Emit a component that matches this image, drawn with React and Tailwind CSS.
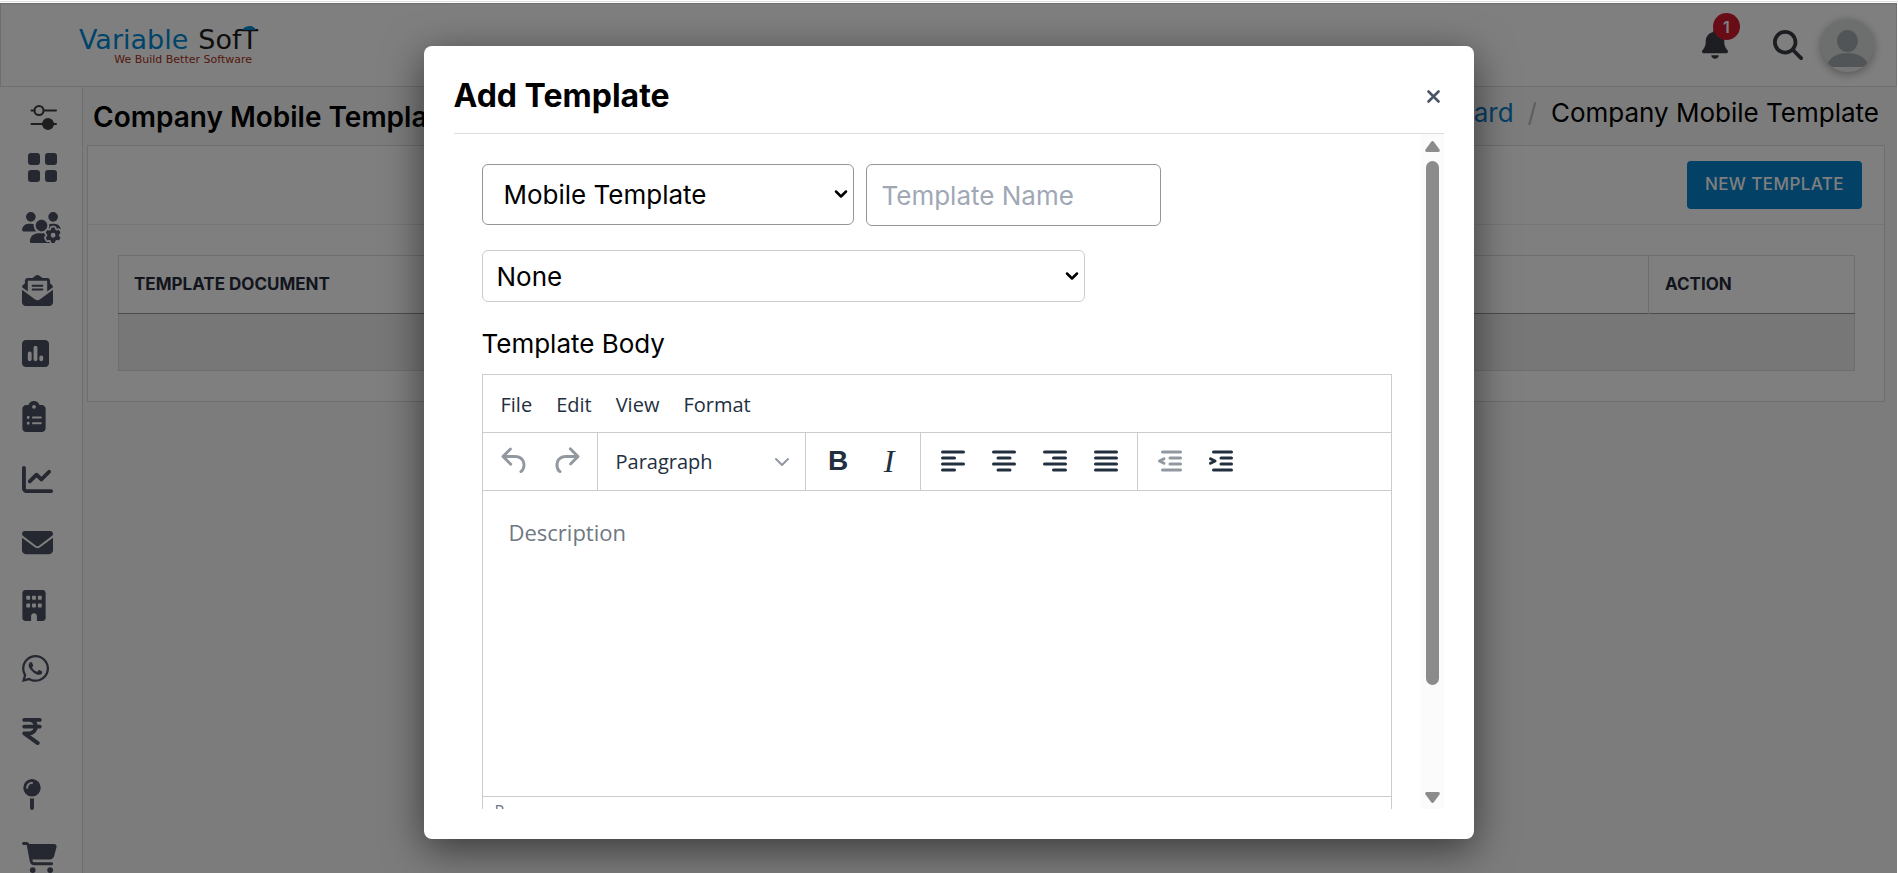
import {
  FaBell,
  FaBuilding,
  FaCartShopping,
  FaChartLine,
  FaClipboardList,
  FaEnvelope,
  FaEnvelopeOpenText,
  FaIndianRupeeSign,
  FaMagnifyingGlass,
  FaMapPin,
  FaSquarePollVertical,
  FaUsersGear,
  FaWhatsapp,
} from "react-icons/fa6";
import { ChevronDown } from "lucide-react";

const NAV = [
  ["Users", FaUsersGear, "w-[39px]"],
  ["Letters", FaEnvelopeOpenText, "w-[31px]"],
  ["Polls", FaSquarePollVertical, "w-[27px]"],
  ["Tasks", FaClipboardList, "w-6"],
  ["Reports", FaChartLine, "w-[31px]"],
  ["Mail", FaEnvelope, "w-[31px]"],
  ["Company", FaBuilding, "w-6"],
  ["WhatsApp", FaWhatsapp, "w-[27px]"],
  ["Payments", FaIndianRupeeSign, "w-5"],
  ["Locations", FaMapPin, "w-5"],
  ["Orders", FaCartShopping, "w-[35px]"],
];

const UNDO =
  "M6.4 8H12c3.7 0 6.2 2 6.8 5.1.6 2.7-.4 5.6-2.3 6.8a1 1 0 0 1-1-1.8c1.1-.6 1.8-2.7 1.4-4.6-.5-2.1-2.1-3.5-4.9-3.5H6.4l3.3 3.3a1 1 0 1 1-1.4 1.4l-5-5a1 1 0 0 1 0-1.4l5-5a1 1 0 0 1 1.4 1.4L6.4 8Z";
const REDO =
  "M17.6 10H12c-2.8 0-4.4 1.4-4.9 3.5-.4 2 .3 4 1.4 4.6a1 1 0 1 1-1 1.8c-2-1.2-2.9-4.1-2.3-6.8.6-3 3-5.1 6.8-5.1h5.6l-3.3-3.3a1 1 0 1 1 1.4-1.4l5 5a1 1 0 0 1 0 1.4l-5 5a1 1 0 0 1-1.4-1.4l3.3-3.3Z";

function Tool({ label, muted, children }) {
  return (
    <button
      type="button"
      aria-label={label}
      className={`flex w-[51px] items-center justify-center ${muted ? "text-[#9198a0]" : "text-[#222f3e]"}`}
    >
      {children}
    </button>
  );
}

function Glyph({ d }) {
  return (
    <svg viewBox="0 0 24 24" className="size-9" fill="currentColor" aria-hidden="true">
      <path d={d} />
    </svg>
  );
}

/* Four rounded bars, each given as [start, end] on the 24-unit grid. */
function Bars({ rows, arrow }) {
  return (
    <svg viewBox="0 0 24 24" className="size-9" fill="none" stroke="currentColor" strokeWidth="2" strokeLinecap="round" aria-hidden="true">
      {rows.map(([a, b], i) => (
        <path key={i} d={`M${a + 1} ${6 + i * 4}H${b - 1}`} />
      ))}
      {arrow && <path d={arrow} strokeLinejoin="round" />}
    </svg>
  );
}

function Group({ children }) {
  return <div className="flex border-r border-[#cccccc] pb-0.5 pl-[7px] pr-[5px]">{children}</div>;
}

function Header() {
  return (
    <header className="flex h-[84px] shrink-0 items-start justify-between border border-[#dcdcdc] bg-white pl-[78px] pr-[22px]">
      <a href="#home" className="flex flex-col pt-5 font-['DejaVu_Sans',sans-serif]">
        <span className="flex items-baseline gap-2.5 text-[27px] leading-8">
          <span className="text-[#0088d4]">Variable</span>
          <span className="relative text-[#1c1c1c]">
            SofT
            <svg viewBox="0 0 14 4" className="absolute right-0.5 top-0.5 h-1 w-3.5" aria-hidden="true">
              <path d="M0 4C2 1 5 0 8 0s5 2 6 4z" fill="#0088d4" />
            </svg>
          </span>
        </span>
        <span className="-mt-0.5 self-end pr-1.5 text-[11px] leading-3 text-[#a83218]">We Build Better Software</span>
      </a>
      <div className="flex items-start pt-[15px]">
        <button type="button" aria-label="Notifications" className="relative mt-2.5 text-[#3a3d42]">
          <FaBell className="h-[30px] w-[26px]" />
          <span className="absolute -right-3 -top-4 flex size-[27px] items-center justify-center rounded-full bg-[#d01a2e] font-['Inter',sans-serif] text-base font-semibold text-white">
            1
          </span>
        </button>
        <button type="button" aria-label="Search" className="ml-[45px] mt-[11px] text-[#3a3d42]">
          <FaMagnifyingGlass className="size-[30px]" />
        </button>
        <button type="button" aria-label="Account" className="ml-[18px] size-[53px] overflow-hidden rounded-full bg-[#dadcdd] shadow-[0_2px_10px_rgba(0,0,0,0.35)]">
          <svg viewBox="0 0 53 53" className="size-full" aria-hidden="true">
            <rect y="48" width="53" height="5" fill="#ececec" />
            <ellipse cx="26.500" cy="22" rx="10.500" ry="11" fill="#a4aaae" />
            <path d="M7 48V43C11 37 18 34 26.500 34S42 37 46 43V48z" fill="#a4aaae" />
          </svg>
        </button>
      </div>
    </header>
  );
}

function Sidebar() {
  return (
    <nav className="flex w-[83px] shrink-0 flex-col items-start overflow-hidden border-r border-[#dcdcdc] bg-white pl-[22px] text-[#4b5063]">
      <a href="#filters" aria-label="Filters" className="ml-2 mt-[17px] text-[#3c3c3c]">
        <svg viewBox="0 0 28 26" className="h-[26px] w-7" fill="none" stroke="currentColor" strokeWidth="2" strokeLinecap="round" aria-hidden="true">
          <path d="M1.500 6.500H4.500M14 6.500H26M1.500 20H26" />
          <circle cx="9" cy="6.500" r="4.500" />
          <circle cx="18" cy="20" r="5" fill="currentColor" />
        </svg>
      </a>
      <a href="#dashboard" aria-label="Dashboard" className="ml-1.5 mt-[23px]">
        <svg viewBox="0 0 29 29" className="size-[29px]" fill="currentColor" aria-hidden="true">
          <rect width="12" height="12" rx="3" />
          <rect x="17" width="12" height="12" rx="3" />
          <rect y="17" width="12" height="12" rx="3" />
          <rect x="17" y="17" width="12" height="12" rx="3" />
        </svg>
      </a>
      <ul className="mt-[30px] flex flex-col gap-8">
        {NAV.map(([name, Icon, width]) => (
          <li key={name}>
            <a href={`#${name.toLowerCase()}`} aria-label={name} className="block">
              <Icon className={`h-[31px] ${width}`} />
            </a>
          </li>
        ))}
      </ul>
    </nav>
  );
}

function TemplatesPage() {
  return (
    <main className="flex-1 bg-[#f8f8f8] pl-1 pr-3">
      <div className="flex h-[58px] items-start justify-between pl-1.5 pr-1.5">
        <h1 className="pt-3 text-[28px] font-semibold leading-9 text-black">Company Mobile Template</h1>
        <ol className="flex gap-3.5 pt-2 text-[26px] leading-9 text-black">
          <li>
            <a href="#dashboard" className="text-[#0a7fc9]">Dashboard</a>
          </li>
          <li aria-hidden="true" className="text-[#bdbdbd]">/</li>
          <li>Company Mobile Template</li>
        </ol>
      </div>
      <section className="border border-[#dcdcdc] bg-white">
        <div className="flex h-[79px] items-center justify-end border-b border-[#ebebeb] pr-[22px]">
          <button type="button" className="h-12 rounded bg-[#0682cd] px-[18px] text-[17px] font-medium tracking-wide text-white">
            NEW TEMPLATE
          </button>
        </div>
        <div className="py-[30px] pl-[30px] pr-[29px]">
          <table className="w-full border-collapse border border-[#dcdcdc] text-left text-[17px] font-semibold text-[#252b3a]">
            <thead>
              <tr className="h-[58px] border-b border-b-[#999999]">
                <th scope="col" className="px-[15px]">TEMPLATE DOCUMENT</th>
                <th scope="col" className="w-[206px] border-l border-[#dcdcdc] px-4">ACTION</th>
              </tr>
            </thead>
            <tbody>
              <tr className="h-[57px] bg-[#eeeeee]">
                <td colSpan={2} />
              </tr>
            </tbody>
          </table>
        </div>
      </section>
    </main>
  );
}

function Editor() {
  return (
    <div className="mr-[29px] flex min-h-0 flex-1 flex-col border-x border-t border-[#cccccc] font-['Open_Sans',sans-serif] text-xl text-[#222f3e]">
      <div className="flex h-[58px] shrink-0 items-center gap-6 border-b border-[#cccccc] pl-[18px] pt-0.5">
        <button type="button">File</button>
        <button type="button">Edit</button>
        <button type="button">View</button>
        <button type="button">Format</button>
      </div>
      <div className="flex h-[58px] shrink-0 border-b border-[#cccccc]">
        <Group>
          <Tool label="Undo" muted><Glyph d={UNDO} /></Tool>
          <Tool label="Redo" muted><Glyph d={REDO} /></Tool>
        </Group>
        <Group>
          <button type="button" className="flex w-[195px] items-center justify-between pl-[11px] pr-1.5 pt-0.5">
            Paragraph
            <ChevronDown className="size-6 text-[#9198a0]" />
          </button>
        </Group>
        <Group>
          <Tool label="Bold">
            <span className="font-['Liberation_Sans',sans-serif] text-[28px] font-bold leading-8">B</span>
          </Tool>
          <Tool label="Italic">
            <span className="font-['Liberation_Serif',serif] text-[32px] italic leading-8">I</span>
          </Tool>
        </Group>
        <Group>
          <Tool label="Align left"><Bars rows={[[4, 20], [4, 14], [4, 20], [4, 14]]} /></Tool>
          <Tool label="Align center"><Bars rows={[[4, 20], [7, 17], [4, 20], [7, 17]]} /></Tool>
          <Tool label="Align right"><Bars rows={[[4, 20], [10, 20], [4, 20], [10, 20]]} /></Tool>
          <Tool label="Justify"><Bars rows={[[4, 20], [4, 20], [4, 20], [4, 20]]} /></Tool>
        </Group>
        <div className="flex pb-0.5 pl-[7px]">
          <Tool label="Decrease indent" muted>
            <Bars rows={[[6, 20], [11, 20], [11, 20], [6, 20]]} arrow="M8 10.500L5 12l3 1.500" />
          </Tool>
          <Tool label="Increase indent">
            <Bars rows={[[6, 20], [11, 20], [11, 20], [6, 20]]} arrow="M5 10.500L8 12l-3 1.500" />
          </Tool>
        </div>
      </div>
      <textarea
        aria-label="Template body"
        placeholder="Description"
        className="min-h-0 flex-1 resize-none px-[26px] py-[23px] text-[22px] leading-9 outline-none placeholder:text-[#6f7883]"
      />
      <div className="h-[13px] shrink-0 overflow-hidden border-t border-[#cccccc] pl-3 pt-1 text-base leading-5 text-[#6f7883]">P</div>
    </div>
  );
}

function ScrollTrack() {
  return (
    <div aria-hidden="true" className="flex w-[23px] shrink-0 flex-col items-center bg-[#fbfbfb] pb-1.5 pt-[7px] text-[#8b8b8b]">
      <svg viewBox="0 0 15 11" className="h-[11px] w-[15px] shrink-0" fill="currentColor">
        <path d="M6 1Q7.500-1 9 1L14.500 8.500Q15.500 11 13 11H2Q-.5 11 .5 8.500z" />
      </svg>
      <div className="mt-[9px] flex w-[13px] flex-1 flex-col">
        <div className="h-[83%] rounded-full bg-[#8b8b8b]" />
      </div>
      <svg viewBox="0 0 15 11" className="h-[11px] w-[15px] shrink-0" fill="currentColor">
        <path d="M6 10Q7.500 12 9 10L14.500 2.500Q15.500 0 13 0H2Q-.5 0 .5 2.500z" />
      </svg>
    </div>
  );
}

function AddTemplateDialog() {
  return (
    <div
      role="dialog"
      aria-labelledby="dialog-title"
      className="flex h-full w-full max-w-[1050px] flex-col rounded-lg bg-white p-[30px] shadow-[0_10px_40px_rgba(0,0,0,0.55)]"
    >
      <div className="flex h-[58px] shrink-0 items-start justify-between border-b border-[#dddddd]">
        <h2 id="dialog-title" className="text-[32px] font-bold leading-10 text-black">Add Template</h2>
        <button type="button" aria-label="Close" className="mt-2 flex h-6 w-5 items-center justify-center text-[#4a5568]">
          <svg viewBox="0 0 13 13" className="size-[13px]" fill="none" stroke="currentColor" strokeWidth="2.600" strokeLinecap="round" aria-hidden="true">
            <path d="M1.500 1.500l10 10M11.500 1.500l-10 10" />
          </svg>
        </button>
      </div>
      <div className="flex min-h-0 flex-1">
        <form className="flex min-w-0 flex-1 flex-col pl-7 pt-[30px] text-[26px] text-black">
          <div className="flex items-start gap-3">
            <div className="relative">
              <select aria-label="Template type" className="block h-[61px] w-[372px] appearance-none rounded-md border border-[#959595] bg-white pl-[21px]">
                <option>Mobile Template</option>
              </select>
              <ChevronDown className="pointer-events-none absolute right-[3px] top-5 size-5" strokeWidth={3} />
            </div>
            <input
              aria-label="Template name"
              placeholder="Template Name"
              className="h-[62px] w-[295px] rounded-md border border-[#959595] px-[15px] placeholder:text-[#a0a8b6]"
            />
          </div>
          <div className="relative mt-6 w-[603px]">
            <select aria-label="Parent template" className="block h-[52px] w-full appearance-none rounded-md border border-[#cccccc] bg-white pl-3.5">
              <option>None</option>
            </select>
            <ChevronDown className="pointer-events-none absolute right-[3px] top-4 size-5" strokeWidth={3} />
          </div>
          <p className="mb-3 mt-[23px] leading-[37px]">Template Body</p>
          <Editor />
        </form>
        <ScrollTrack />
      </div>
    </div>
  );
}

export default function App() {
  return (
    <div className="flex h-screen flex-col overflow-hidden bg-white pr-px font-['Inter',sans-serif]">
      <div className="-mr-px mt-px h-0.5 shrink-0 border-t border-[#dddddd]" />
      <div className="relative flex min-h-0 flex-1 flex-col">
        <Header />
        <div className="flex min-h-0 flex-1">
          <Sidebar />
          <TemplatesPage />
        </div>
        <div className="absolute inset-0 flex justify-center overflow-hidden bg-black/50 pb-[34px] pt-[43px]">
          <AddTemplateDialog />
        </div>
      </div>
    </div>
  );
}
